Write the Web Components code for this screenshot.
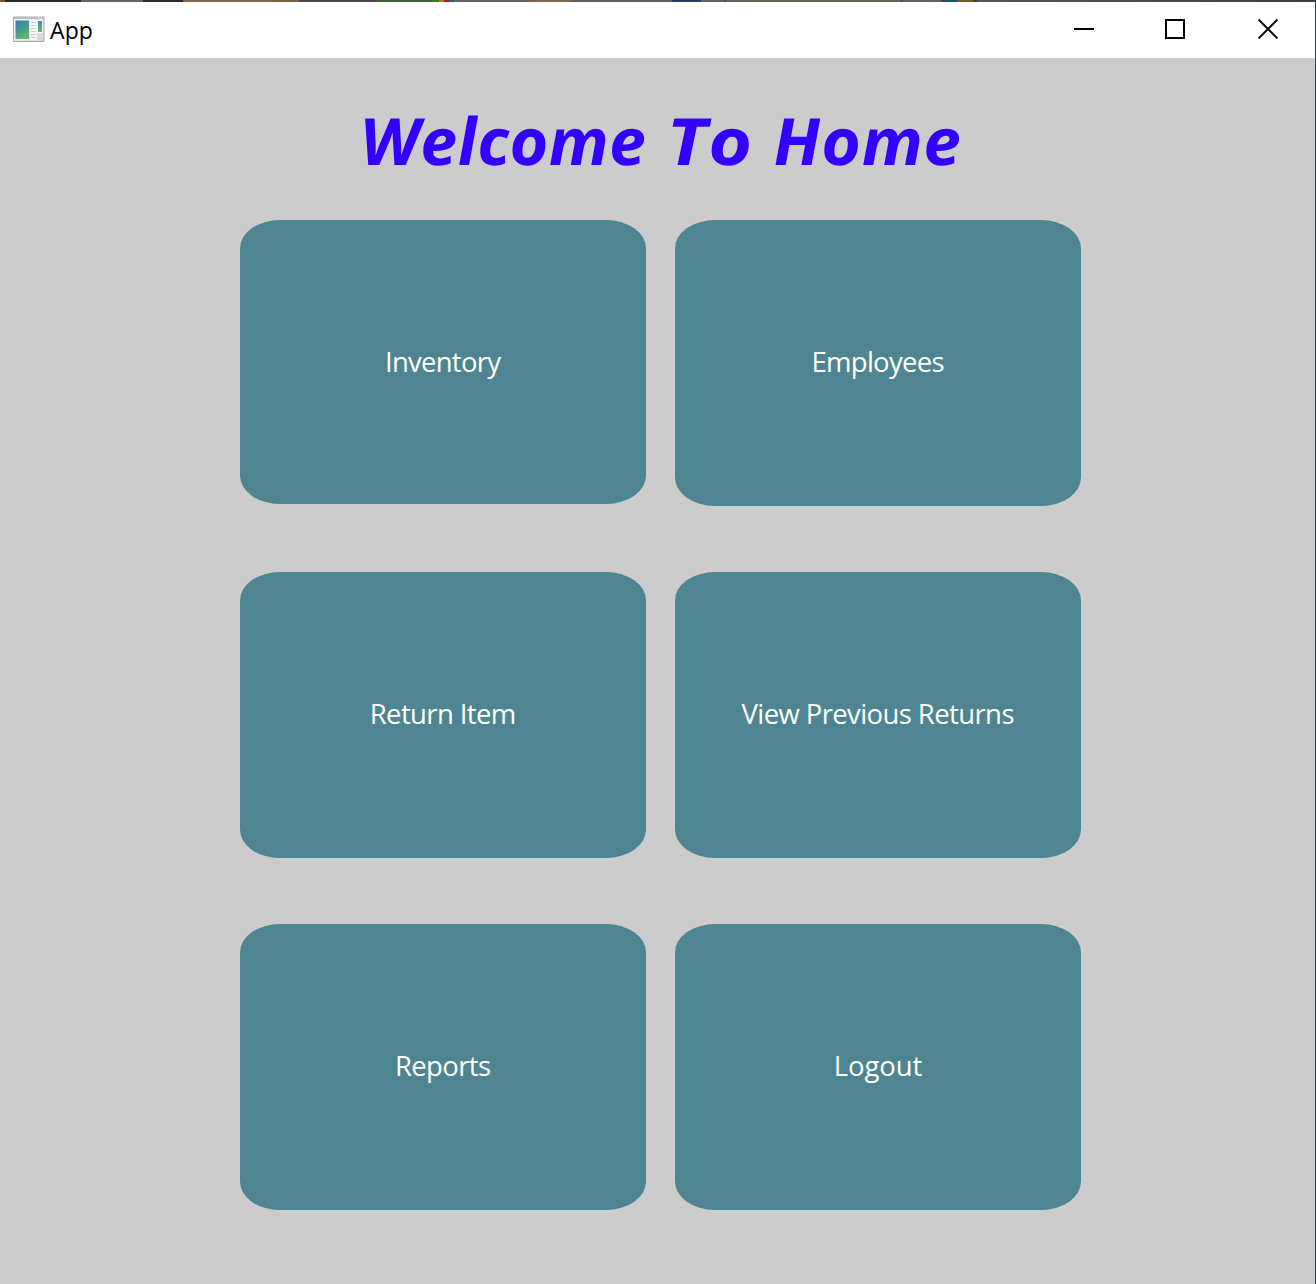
<!DOCTYPE html>
<html lang="en">
<head>
<meta charset="utf-8">
<title>App</title>
<style>
html,body{margin:0;height:100%;overflow:hidden;background:#ccc}
body{font-family:"Open Sans","Noto Sans",sans-serif}
</style>
</head>
<body>
<app-window>
  <title-bar slot="bar">App</title-bar>
  <page-heading slot="heading">
    <fit-text width="286" stretch="1.03" skew="2">Welcome</fit-text>
    <fit-text width="85" stretch="1.16" skew="2">To</fit-text>
    <fit-text width="188" stretch="1.05" skew="2">Home</fit-text>
  </page-heading>
  <menu-tile class="first"><fit-text width="116">Inventory</fit-text></menu-tile>
  <menu-tile><fit-text width="133">Employees</fit-text></menu-tile>
  <menu-tile><fit-text width="146.500">Return Item</fit-text></menu-tile>
  <menu-tile><fit-text width="273">View Previous Returns</fit-text></menu-tile>
  <menu-tile><fit-text width="96">Reports</fit-text></menu-tile>
  <menu-tile><fit-text width="88.500">Logout</fit-text></menu-tile>
</app-window>
<script>
const define = (name, html, setup) => {
  const t = document.createElement('template');
  t.innerHTML = html;
  customElements.define(name, class extends HTMLElement {
    constructor() {
      super();
      this.attachShadow({mode: 'open'}).append(t.content.cloneNode(true));
    }
    connectedCallback() { if (setup) setup(this); }
  });
};

define('app-window', `
<style>
:host{display:flex;flex-direction:column;width:1316px;height:1284px;background:#ccc}
.edge{height:2px;flex:none;background:linear-gradient(90deg,#71562d 0 5px,#272a29 5px 81px,#686565 81px 143px,#282b29 143px 183px,#75674a 183px 272px,#756243 272px 299px,#47484a 299px 376px,#435f36 376px 432px,#497033 432px 439px,#a28a16 439px 444px,#9d1b38 444px 449px,#245f83 449px 454px,#6c6262 454px 530px,#75674a 530px 572px,#655e5c 572px 672px,#263d61 672px 701px,#67625f 701px 725px,#444 725px 726px,#69645e 726px 901px,#444 901px 902px,#626062 902px 941px,#204f70 941px 957px,#76592c 957px 973px,#3e3e43 973px 977px,#565354 977px,#4e504b 1100px,#393d42 1316px)}
.frame{flex:1;min-height:0;display:flex;flex-direction:column;border-right:1px solid #3b3f43}
main{display:flex;flex-direction:column;align-items:center;padding-left:6px}
.tiles{display:grid;grid-template-columns:406px 406px;grid-auto-rows:286px;gap:66px 29px}
</style>
<div class="edge"></div>
<div class="frame"><slot name="bar"></slot><main><slot name="heading"></slot><div class="tiles"><slot></slot></div></main></div>`);

define('title-bar', `
<style>
:host{display:flex;height:56px;flex:none;background:#fff;color:#000;font:23px/56px "Open Sans",sans-serif}
.icon{margin:14px 5px 0 13px;width:32px;height:27px;flex:none}
.name{letter-spacing:.1px}
.controls{display:flex;margin-left:auto;padding:14px 33px 0 0}
.controls svg{width:26px;height:26px;display:block}
.controls svg+svg{margin-left:67px}
.controls svg:last-child{margin-left:66px}
</style>
<svg class="icon" viewBox="0 0 32 27">
 <defs>
  <linearGradient id="g" x1="0" y1="0" x2=".6" y2="1"><stop stop-color="#397eac"/><stop offset=".5" stop-color="#459595"/><stop offset="1" stop-color="#65b76c"/></linearGradient>
  <linearGradient id="b" x1="0" y1="0" x2="0" y2="1"><stop stop-color="#418bb3"/><stop offset="1" stop-color="#62b875"/></linearGradient>
  <linearGradient id="f" x1="0" y1="0" x2="1" y2="1"><stop stop-color="#fafafa"/><stop offset="1" stop-color="#d4d5d7"/></linearGradient>
 </defs>
 <path d="M.5 1h30.500v24.500H.5z" fill="url(#f)" stroke="#a9adb3"/>
 <path d="M1 1h30v2H1z" fill="#b7bdc8"/>
 <path d="M25 2h1.500m1 0H29" stroke="#f1f2f3"/>
 <path d="M2 4h14v20H2z" fill="#e8eeee"/>
 <path d="M2.500 4.500h13.500v18.500h-13.500z" fill="url(#g)"/>
 <path d="M17 4h7v20h-7z" fill="#f8f8f8"/>
 <path d="M18 6.500h5m-5 3h5m-5 3h5m-5 3h5m-5 3h5m-5 3h5" stroke="#c8cbce"/>
 <path d="M24.500 4h5v13h-5z" fill="#fff"/>
 <path d="M25 5h4v11h-4z" fill="url(#b)"/>
</svg>
<span class="name"><slot></slot></span>
<div class="controls">
 <svg viewBox="0 0 26 26"><path d="M3 13h20" fill="none" stroke="#000" stroke-width="2"/></svg>
 <svg viewBox="0 0 26 26"><path d="M2 4h18v18H2z" fill="none" stroke="#000" stroke-width="2"/></svg>
 <svg viewBox="0 0 26 26"><path d="M2.500 3.500l19 19m0-19l-19 19" fill="none" stroke="#111" stroke-width="2"/></svg>
</div>`);

define('page-heading', `
<style>
:host{display:flex;align-items:center;justify-content:center;gap:21px;height:162px;box-sizing:border-box;padding-top:2px;color:#30f;font:italic 700 65px/1 "Open Sans",sans-serif}
</style><slot></slot>`);

define('menu-tile', `
<style>
:host{display:flex;align-items:center;justify-content:center;box-sizing:border-box;padding-bottom:2px;background:#4e8590;border-radius:40px/28.5px;color:#fff;font:27.5px/38px "Open Sans",sans-serif}
:host(.first){margin:0 0 2px;padding-bottom:0}
</style><slot></slot>`);

// Distributes tracking so that a label, widened by its stretch factor, occupies its nominal width.
// An optional skew, in degrees, makes an italic more upright.
define('fit-text', `<style>:host{display:inline-block;white-space:nowrap;transform-origin:left center}</style><slot></slot>`, el => {
  const width = +el.getAttribute('width'), stretch = +el.getAttribute('stretch') || 1;
  const skew = +el.getAttribute('skew') || 0;
  const natural = el.getBoundingClientRect().width;
  el.style.letterSpacing = ((width / stretch - natural) / (el.textContent.length - 1)) + 'px';
  el.style.width = width + 'px';
  if (stretch !== 1) el.style.transform = `skewX(${skew}deg) scaleX(${stretch})`;
});
</script>
</body>
</html>
